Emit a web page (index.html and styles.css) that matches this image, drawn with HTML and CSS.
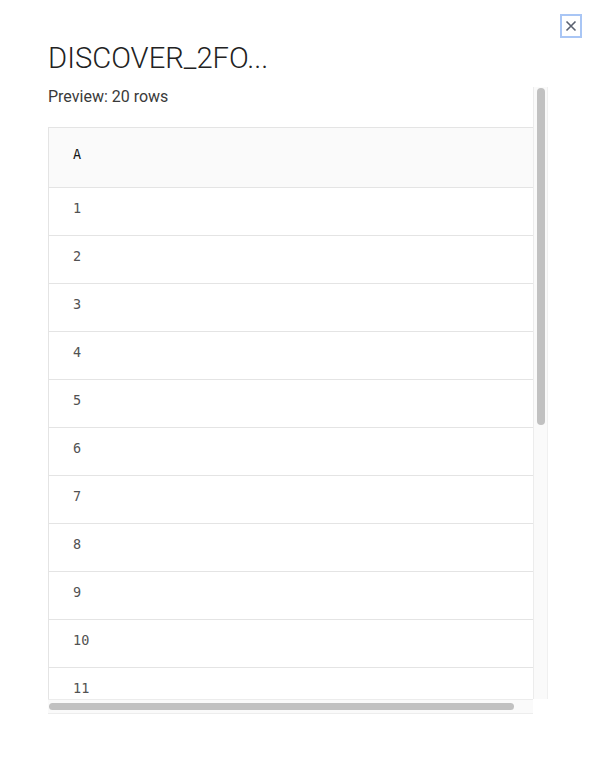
FILE: index.html
```html
<!DOCTYPE html>
<html lang="en">
<head>
<meta charset="utf-8">
<title>Preview</title>
<link rel="stylesheet" href="styles.css">
</head>
<body>
<div class="modal">
  <button class="close" aria-label="Close">
    <svg width="12" height="12" viewBox="0 0 12 12"><path d="M1.5 1.5 L10.5 10.5 M10.5 1.5 L1.5 10.5" stroke="#5a6170" stroke-width="1.6" fill="none"/></svg>
  </button>
  <h1 class="title">DISCOVER_2FO...</h1>
  <div class="frame">
    <div class="viewport">
      <p class="caption">Preview: 20 rows</p>
      <table class="grid">
        <thead><tr><th>A</th></tr></thead>
        <tbody>
          <tr><td>1</td></tr><tr><td>2</td></tr><tr><td>3</td></tr><tr><td>4</td></tr>
          <tr><td>5</td></tr><tr><td>6</td></tr><tr><td>7</td></tr><tr><td>8</td></tr>
          <tr><td>9</td></tr><tr><td>10</td></tr><tr><td>11</td></tr><tr><td>12</td></tr>
          <tr><td>13</td></tr><tr><td>14</td></tr><tr><td>15</td></tr><tr><td>16</td></tr>
          <tr><td>17</td></tr><tr><td>18</td></tr><tr><td>19</td></tr><tr><td>20</td></tr>
        </tbody>
      </table>
    </div>
    <div class="vbar"><div class="vthumb"></div></div>
    <div class="hbar"><div class="hthumb"></div></div>
    <div class="corner"></div>
  </div>
</div>
</body>
</html>
```

FILE: styles.css
```css
html, body {
  margin: 0;
  padding: 0;
  background: #ffffff;
}
body {
  font-family: Roboto, "Liberation Sans", sans-serif;
  color: #161616;
}
.modal {
  position: relative;
  width: 596px;
  height: 762px;
  padding: 40px 48px 0 48px;
  box-sizing: border-box;
}
.close {
  position: absolute;
  top: 14px;
  left: 560px;
  width: 22px;
  height: 24px;
  padding: 0;
  margin: 0;
  background: #ffffff;
  border: 2px solid #a9c6f5;
  display: flex;
  align-items: center;
  justify-content: center;
  box-sizing: border-box;
}
.title {
  margin: 0;
  font-size: 29.2px;
  line-height: 36px;
  font-weight: 300;
  color: #222222;
  height: 47px;
}
.frame {
  display: grid;
  grid-template-columns: 485px 15px;
  grid-template-rows: 612px 15px;
  width: 500px;
}
.viewport {
  overflow: hidden;
}
.caption {
  margin: 0;
  height: 40px;
  font-size: 16px;
  line-height: 20px;
  color: #3a3a3a;
}
.grid {
  border-collapse: collapse;
  width: 506px;
  border: 1px solid #e4e4e4;
}
.grid th, .grid td {
  text-align: left;
  padding: 0 0 8px 24px;
  font-family: "DejaVu Sans Mono", "Liberation Mono", monospace;
  font-size: 13.5px;
  border-bottom: 1px solid #e4e4e4;
}
.grid th {
  height: 51px;
  background: #fafafa;
  font-weight: normal;
  color: #161616;
}
.grid td {
  height: 39px;
  color: #525252;
}
.vbar {
  background: #fafafa;
  border-left: 1px solid #ececec;
  border-right: 1px solid #f0f0f0;
  padding: 1px 2px 0 3px;
}
.vthumb {
  height: 337px;
  background: #c1c1c1;
  border-radius: 5px;
}
.hbar {
  background: #fafafa;
  border-top: 1px solid #ececec;
  border-bottom: 1px solid #ededed;
  padding: 3px 19px 3px 1px;
}
.hthumb {
  height: 7px;
  background: #c1c1c1;
  border-radius: 4px;
}
.corner {
  background: #ffffff;
}
```
